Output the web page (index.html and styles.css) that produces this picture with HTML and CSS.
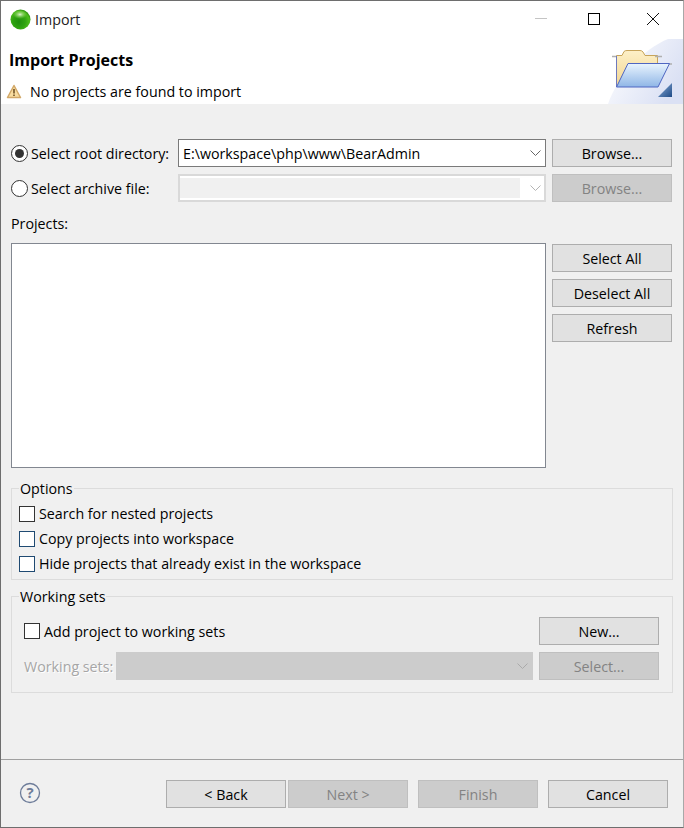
FILE: index.html
```html
<!DOCTYPE html>
<html lang="en">
<head>
<meta charset="utf-8">
<title>Import</title>
<link rel="stylesheet" href="styles.css">
</head>
<body>
<div class="window">
  <header class="titlebar">
    <svg class="app-icon" width="21" height="21" viewBox="0 0 21 21">
      <defs>
        <radialGradient id="sph" cx="0.42" cy="0.62" r="0.62">
          <stop offset="0" stop-color="#1f8f0c"/>
          <stop offset="0.5" stop-color="#2fa310"/>
          <stop offset="0.85" stop-color="#4cbc1a"/>
          <stop offset="1" stop-color="#2f9413"/>
        </radialGradient>
        <radialGradient id="shine" cx="0.5" cy="0.5" r="0.5">
          <stop offset="0" stop-color="#e8f7d8" stop-opacity="0.95"/>
          <stop offset="1" stop-color="#8fdc55" stop-opacity="0"/>
        </radialGradient>
      </defs>
      <circle cx="10.500" cy="10.500" r="10" fill="url(#sph)"/>
      <ellipse cx="10" cy="5.500" rx="7" ry="4.500" fill="url(#shine)"/>
    </svg>
    <span class="title">Import</span>
    <div class="caption">
      <svg width="46" height="38" viewBox="0 0 46 38"><path d="M17 18.500h12" stroke="#c4c4c4" fill="none"/></svg>
      <svg width="60" height="38" viewBox="0 0 60 38"><rect x="24.500" y="13.500" width="11" height="11" stroke="#000" fill="none"/></svg>
      <svg width="59" height="38" viewBox="0 0 59 38"><path d="M23 13l12 12M35 13l-12 12" stroke="#111" fill="none"/></svg>
    </div>
  </header>

  <section class="banner">
    <div class="banner-text">
      <h1 class="banner-title">Import Projects</h1>
      <div class="banner-msg">
        <svg width="16" height="15" viewBox="0 0 16 15">
          <path d="M8 1.500L14.500 13.500H1.500Z" fill="#f8dca0" stroke="#d2a868" stroke-width="1.500" stroke-linejoin="round"/>
          <path d="M8 5v4.500M8 10.500v1.500" stroke="#6e5226" stroke-width="1.600" fill="none"/>
        </svg>
        <span>No projects are found to import</span>
      </div>
    </div>
    <svg class="banner-art" width="75" height="65" viewBox="0 0 75 65">
      <defs>
        <linearGradient id="bg" x1="0" y1="0" x2="1" y2="0.5">
          <stop offset="0" stop-color="#ffffff"/>
          <stop offset="1" stop-color="#dbe1f4"/>
        </linearGradient>
        <linearGradient id="back" x1="0" y1="0" x2="0" y2="1">
          <stop offset="0" stop-color="#fdf0c8"/>
          <stop offset="1" stop-color="#f2d590"/>
        </linearGradient>
        <linearGradient id="front" x1="0" y1="0" x2="0" y2="1">
          <stop offset="0" stop-color="#e9f4fe"/>
          <stop offset="1" stop-color="#8fb6e6"/>
        </linearGradient>
        <linearGradient id="tri" x1="0" y1="0" x2="1" y2="1">
          <stop offset="0" stop-color="#8fb0da"/>
          <stop offset="1" stop-color="#1e4a86"/>
        </linearGradient>
      </defs>
      <path d="M0 65C8 40 35 10 60 0H75V65Z" fill="url(#bg)"/>
      <path d="M8.500 48V16.500H14L16 12.500Q17 11.500 19 11.500H32Q34 11.500 35 13L37 16.500H49.500V26" fill="url(#back)" stroke="#c7a45a"/>
      <path d="M4 17.500h5M47 17.500h7M59 25h5" stroke="#b0b0b0" stroke-width="1.500" fill="none"/>
      <path d="M8.500 48V17" stroke="#6e79bd" fill="none"/>
      <path d="M8.500 48L20 24.500H61.500L50 48Z" fill="url(#front)" stroke="#4f66c2"/>
      <path d="M50 58L64 44V58Z" fill="url(#tri)"/>
    </svg>
  </section>

  <main class="content">
    <div class="source-grid">
      <label class="choice">
        <span class="radio radio-on"></span>
        <span>Select root directory:</span>
      </label>
      <div class="combo">
        <span class="combo-value">E:\workspace\php\www\BearAdmin</span>
        <svg class="chev" width="11" height="6" viewBox="0 0 11 6"><path d="M.5.500L5.500 5.500L10.500.5" stroke="#666" fill="none"/></svg>
      </div>
      <button class="btn">Browse...</button>

      <label class="choice">
        <span class="radio"></span>
        <span>Select archive file:</span>
      </label>
      <div class="combo combo-off">
        <span class="combo-fill"></span>
        <svg class="chev" width="11" height="6" viewBox="0 0 11 6"><path d="M.5.500L5.500 5.500L10.500.5" stroke="#b4b4b4" fill="none"/></svg>
      </div>
      <button class="btn btn-off">Browse...</button>
    </div>

    <div class="projects-label">Projects:</div>
    <div class="projects-row">
      <div class="project-list"></div>
      <div class="project-actions">
        <button class="btn">Select All</button>
        <button class="btn">Deselect All</button>
        <button class="btn">Refresh</button>
      </div>
    </div>

    <fieldset class="group options">
      <legend>Options</legend>
      <label class="check"><span class="box"></span><span>Search for nested projects</span></label>
      <label class="check"><span class="box box-blue"></span><span>Copy projects into workspace</span></label>
      <label class="check"><span class="box box-blue"></span><span>Hide projects that already exist in the workspace</span></label>
    </fieldset>

    <fieldset class="group sets">
      <legend>Working sets</legend>
      <div class="sets-row">
        <label class="check"><span class="box"></span><span>Add project to working sets</span></label>
        <button class="btn">New...</button>
      </div>
      <div class="sets-row sets-row-2">
        <span class="muted">Working sets:</span>
        <div class="combo combo-grey">
          <svg class="chev" width="11" height="6" viewBox="0 0 11 6"><path d="M.5.500L5.500 5.500L10.500.5" stroke="#aaa" fill="none"/></svg>
        </div>
        <button class="btn btn-off">Select...</button>
      </div>
    </fieldset>
  </main>

  <footer class="footer">
    <svg class="help" width="22" height="22" viewBox="0 0 22 22">
      <circle cx="11" cy="11" r="9.500" fill="none" stroke="#6d7c99" stroke-width="1.300"/>
      <text x="11" y="16" text-anchor="middle" class="help-q">?</text>
    </svg>
    <div class="nav">
      <button class="btn">&lt; Back</button>
      <button class="btn btn-off">Next &gt;</button>
      <button class="btn btn-off nav-finish">Finish</button>
      <button class="btn nav-cancel">Cancel</button>
    </div>
  </footer>
</div>
</body>
</html>
```
FILE: styles.css
```css
* { box-sizing: border-box; }
html, body { margin: 0; padding: 0; }
body {
  width: 684px;
  height: 828px;
  overflow: hidden;
  font-family: "Open Sans", "Noto Sans", sans-serif;
  font-size: 14.25px;
  color: #000;
}
.window {
  width: 684px;
  height: 828px;
  display: flex;
  flex-direction: column;
  background: #f0f0f0;
  border: 1px solid #6e6e6e;
  border-right-color: #a8a8a8;
}
.titlebar {
  height: 38px;
  flex: none;
  display: flex;
  align-items: center;
  background: #fff;
  padding: 0 0 2px 9px;
}
.app-icon { flex: none; }
.title { margin-left: 4px; color: #222; }
.caption { margin-left: auto; display: flex; }
.caption svg { display: block; }

.banner {
  height: 65px;
  flex: none;
  background: #fff;
  display: flex;
  justify-content: space-between;
}
.banner-title {
  margin: 0;
  padding: 10px 0 0 8px;
  font-size: 16px;
  font-weight: 700;
  line-height: 22px;
}
.banner-msg {
  display: flex;
  align-items: center;
  gap: 8px;
  margin-top: 10px;
  padding-left: 5px;
  height: 20px;
}
.banner-art { display: block; flex: none; }

.content {
  flex: 1;
  padding: 35px 10px 0;
}
.source-grid {
  display: grid;
  grid-template-columns: 167px 368px 126px;
  row-gap: 7px;
  grid-auto-rows: 28px;
}
.source-grid .btn { margin-left: 6px; }
.choice { display: flex; align-items: center; gap: 3px; }
.radio {
  width: 17px;
  height: 17px;
  border-radius: 50%;
  border: 1px solid #333;
  background: #fff;
  flex: none;
  position: relative;
}
.radio-on::after {
  content: "";
  position: absolute;
  left: 3px;
  top: 3px;
  width: 9px;
  height: 9px;
  border-radius: 50%;
  background: #333;
}
.combo {
  height: 28px;
  border: 1px solid #7a7a7a;
  background: #fff;
  display: flex;
  align-items: center;
  padding: 0 4px 0 4px;
}
.combo-value { flex: 1; white-space: nowrap; overflow: hidden; }
.chev { flex: none; margin-left: auto; }
.combo-off {
  border: 2px solid #d9d9d9;
  padding: 0 3px 0 0;
}
.combo-fill {
  display: block;
  height: 20px;
  width: 340px;
  background: #f0f0f0;
}
.combo-grey {
  border-color: #cccccc;
  background: #cccccc;
  flex: none;
  width: 417px;
}
.btn {
  display: block;
  height: 28px;
  padding: 0;
  border: 1px solid #adadad;
  background: #e1e1e1;
  font: inherit;
  color: #000;
  text-align: center;
  width: 120px;
  flex: none;
}
.btn-off {
  background: #cccccc;
  border-color: #bfbfbf;
  color: #838383;
}

.projects-label { margin-top: 12px; height: 19px; line-height: 19px; }
.projects-row {
  display: flex;
  gap: 6px;
  margin-top: 10px;
}
.project-list {
  width: 535px;
  height: 225px;
  background: #fff;
  border: 1px solid #828790;
}
.project-actions {
  display: flex;
  flex-direction: column;
  gap: 7px;
  padding-top: 1px;
}

.group {
  margin: 0;
  padding: 0;
  border: 1px solid #dcdcdc;
  min-width: 0;
  width: 662px;
}
.group legend {
  padding: 0 1px;
  line-height: 19px;
  height: 19px;
}
.options {
  margin-top: 11px;
  height: 101px;
  padding: 3px 0 0 7px;
}
.options .check { height: 25px; }
.check {
  display: flex;
  align-items: center;
  gap: 4px;
}
.box {
  width: 16px;
  height: 16px;
  background: #fff;
  border: 1px solid #333;
  flex: none;
}
.box-blue { border-color: #1f4a72; }
.sets {
  margin-top: 7px;
  height: 106px;
  padding: 11px 13px 0 12px;
}
.sets legend { margin-left: -5px; }
.sets-row {
  display: flex;
  justify-content: space-between;
  align-items: center;
  height: 28px;
}
.sets-row-2 {
  margin-top: 7px;
  justify-content: flex-start;
}
.sets-row-2 .combo { margin-left: 5px; margin-right: 6px; padding-right: 4px; }
.muted {
  color: #a6a6a6;
  width: 87px;
  white-space: nowrap;
  text-shadow: 1px 1px 0 #fff;
}

.footer {
  height: 68px;
  flex: none;
  border-top: 1px solid #a0a0a0;
  display: flex;
  align-items: flex-start;
  padding: 20px 15px 0 18px;
  justify-content: space-between;
}
.help { display: block; margin-top: 2px; }
.help-q { font-size: 15px; font-weight: 700; fill: #6d7c99; }
.nav { display: flex; gap: 2px; }
.nav-finish, .nav-cancel { margin-left: 8px; }
```
